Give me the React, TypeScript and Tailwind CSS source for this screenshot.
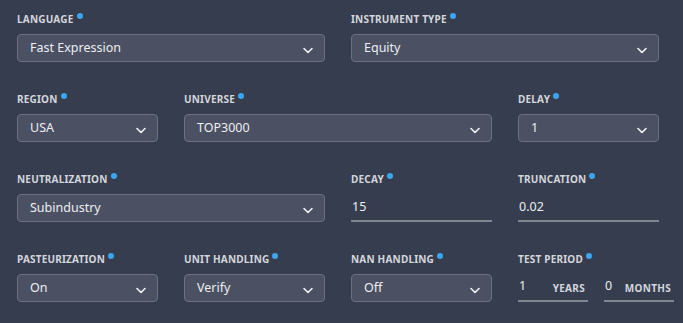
import React from "react";

const Chevron = () => (
  <svg width="10" height="7" viewBox="0 0 10 7" fill="none" className="shrink-0">
    <path d="M1 1.5 L5 5.5 L9 1.5" stroke="#f1f2f5" strokeWidth="1.6" strokeLinecap="round" strokeLinejoin="round" />
  </svg>
);

const Label = ({ text }: { text: string }) => (
  <div className="flex items-start h-[14px] leading-[14px] text-[10px] font-bold tracking-[0.2px] text-[#d3d6dd] uppercase whitespace-nowrap">
    <span className="mt-[1px]">{text}</span>
    <span className="ml-[3px] mt-[2px] w-[6px] h-[6px] rounded-full bg-[#3aa6f2]" />
  </div>
);

const Select = ({ label, value, span }: { label: string; value: string; span?: boolean }) => (
  <div className={span ? "col-span-2" : ""}>
    <Label text={label} />
    <div className="mt-[9px] h-[28px] flex items-center justify-between pl-[12px] pr-[11px] rounded-[4px] border border-[#6b7181] bg-[#4b5162] text-[12.5px] text-[#eceef2]">
      <span className="leading-[18px]">{value}</span>
      <span className="mt-[4px]">
        <Chevron />
      </span>
    </div>
  </div>
);

const TextInput = ({ label, value }: { label: string; value: string }) => (
  <div>
    <Label text={label} />
    <div className="mt-[9px] h-[28px] flex items-center pl-[1px] border-b-2 border-[#80858f] text-[12.5px] text-[#eceef2]">
      <span className="leading-[18px] -mt-[1px]">{value}</span>
    </div>
  </div>
);

const Unit = ({ value, unit }: { value: string; unit: string }) => (
  <div className="w-[70px] shrink-0 h-[28px] flex items-center justify-between pl-[1px] pr-[3px] border-b-2 border-[#80858f]">
    <span className="text-[12.5px] leading-[18px] -mt-[3px] text-[#eceef2]">{value}</span>
    <span className="text-[10px] font-bold tracking-[0.3px] text-[#d3d6dd] mt-[3px]">{unit}</span>
  </div>
);

export default function App() {
  return (
    <div
      className="w-[683px] h-[323px] bg-[#363d4e] overflow-hidden pl-[17px] pt-[11px]"
      style={{ fontFamily: '"Noto Sans", "Open Sans", sans-serif' }}
    >
      <div className="grid grid-cols-[141px_141px_141px_141px] gap-x-[26px] gap-y-[29px]">
        <Select label="Language" value="Fast Expression" span />
        <Select label="Instrument Type" value="Equity" span />

        <Select label="Region" value="USA" />
        <Select label="Universe" value="TOP3000" span />
        <Select label="Delay" value="1" />

        <Select label="Neutralization" value="Subindustry" span />
        <TextInput label="Decay" value="15" />
        <TextInput label="Truncation" value="0.02" />

        <Select label="Pasteurization" value="On" />
        <Select label="Unit Handling" value="Verify" />
        <Select label="NaN Handling" value="Off" />
        <div>
          <Label text="Test Period" />
          <div className="mt-[9px] flex gap-[16px]">
            <Unit value="1" unit="YEARS" />
            <Unit value="0" unit="MONTHS" />
          </div>
        </div>
      </div>
    </div>
  );
}
